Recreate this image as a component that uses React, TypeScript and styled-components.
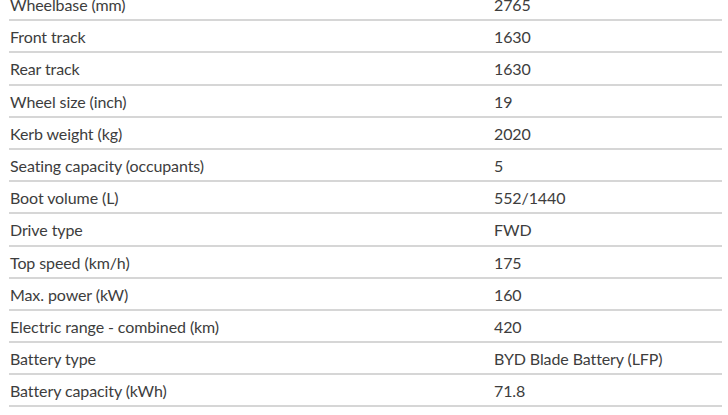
import styled, { createGlobalStyle } from "styled-components";

const GlobalStyle = createGlobalStyle`
  body {
    margin: 0;
    background: #ffffff;
    font-family: "Lato", "Noto Sans", sans-serif;
  }
`;

const Page = styled.div`
  padding: 0 6px 0 9px;
  margin-top: -11px;
  overflow: hidden;
  height: 426px;
`;

const SpecTable = styled.div`
  display: flex;
  flex-direction: column;
`;

const Row = styled.div`
  display: grid;
  grid-template-columns: 484px 1fr;
  height: 32.2px;
  box-sizing: border-box;
  border-bottom: 2px solid #d6d6d6;
  align-items: center;
`;

const Cell = styled.div`
  padding: 1px 1px 0;
  font-size: 16px;
  letter-spacing: -0.1px;
  color: #3d3d3d;
  white-space: nowrap;
`;

const specs: [string, string][] = [
  ["Wheelbase (mm)", "2765"],
  ["Front track", "1630"],
  ["Rear track", "1630"],
  ["Wheel size (inch)", "19"],
  ["Kerb weight (kg)", "2020"],
  ["Seating capacity (occupants)", "5"],
  ["Boot volume (L)", "552/1440"],
  ["Drive type", "FWD"],
  ["Top speed (km/h)", "175"],
  ["Max. power (kW)", "160"],
  ["Electric range - combined (km)", "420"],
  ["Battery type", "BYD Blade Battery (LFP)"],
  ["Battery capacity (kWh)", "71.8"],
];

export default function App() {
  return (
    <>
      <GlobalStyle />
      <Page>
        <SpecTable>
          {specs.map(([label, value]) => (
            <Row key={label}>
              <Cell>{label}</Cell>
              <Cell>{value}</Cell>
            </Row>
          ))}
        </SpecTable>
      </Page>
    </>
  );
}
